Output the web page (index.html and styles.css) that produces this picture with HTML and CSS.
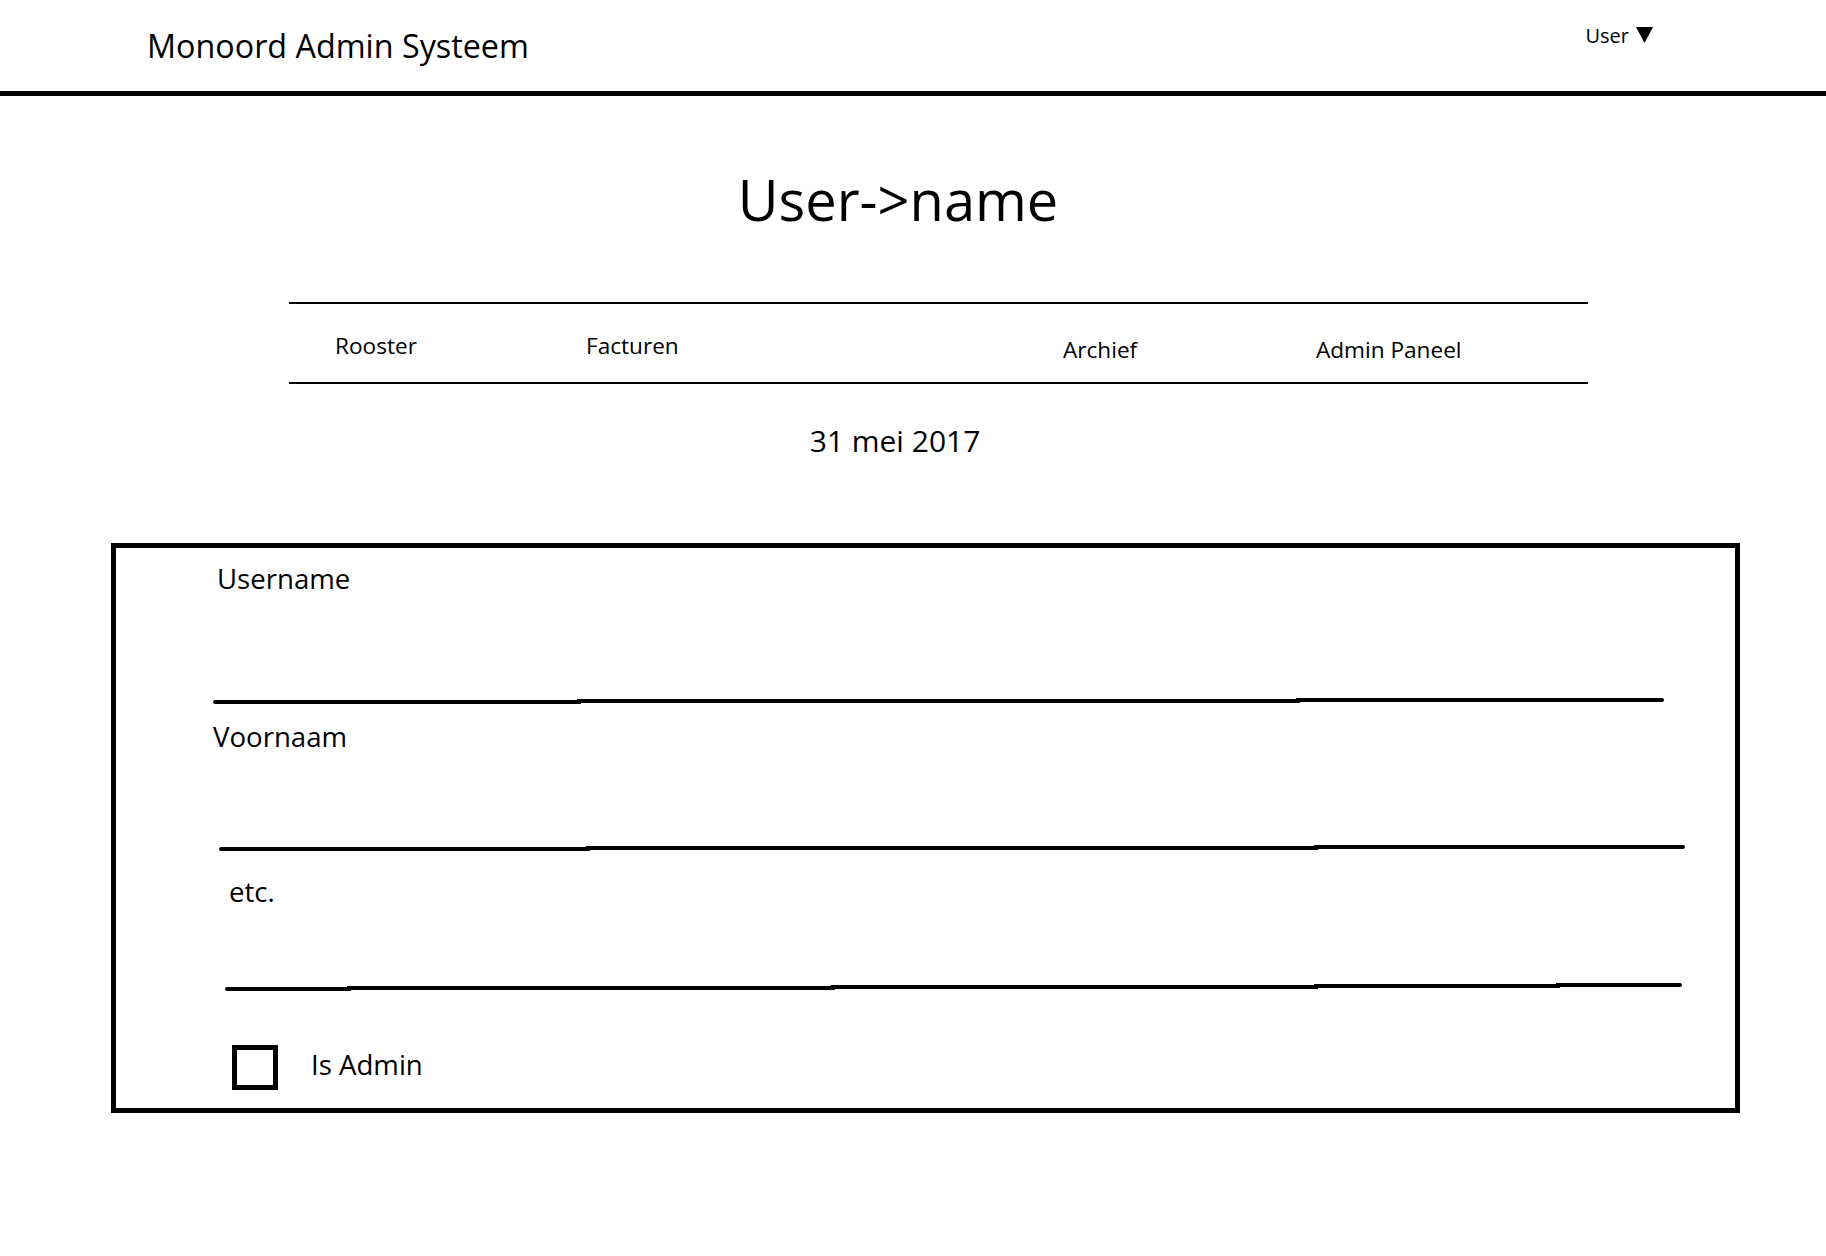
FILE: index.html
```html
<!DOCTYPE html>
<html lang="nl">
<head>
<meta charset="utf-8">
<title>Monoord Admin Systeem</title>
<link rel="stylesheet" href="styles.css">
</head>
<body>
<header class="topbar">
  <div class="brand">Monoord Admin Systeem</div>
  <div class="user-menu">
    <span class="user-label">User</span>
    <svg class="caret" width="17" height="16" viewBox="0 0 17 16"><polygon points="0,0 17,0 8.5,16" fill="#000"/></svg>
  </div>
</header>

<h1 class="page-title">User-&gt;name</h1>

<nav class="tabs">
  <a class="tab">Rooster</a>
  <a class="tab">Facturen</a>
  <a class="tab tab-low">Archief</a>
  <a class="tab tab-low">Admin Paneel</a>
</nav>

<div class="date">31 mei 2017</div>

<section class="form-box">
  <div class="label label-username">Username</div>
  <svg class="field-line line-1" width="1451" height="8" viewBox="0 0 1451 8"><path d="M2 5 H366 V4 H1085 V3 H1449"/></svg>

  <div class="label label-voornaam">Voornaam</div>
  <svg class="field-line line-2" width="1466" height="8" viewBox="0 0 1466 8"><path d="M2 5 H369 V4 H1097 V3 H1464"/></svg>

  <div class="label label-etc">etc.</div>
  <svg class="field-line line-3" width="1457" height="8" viewBox="0 0 1457 8"><path d="M2 6 H124 V5 H608 V4 H1091 V3 H1333 V2 H1455"/></svg>

  <div class="check-row">
    <span class="checkbox"></span>
    <span class="check-label">Is Admin</span>
  </div>
</section>
</body>
</html>
```

FILE: styles.css
```css
html, body {
  margin: 0;
  padding: 0;
  background: #fff;
  color: #000;
  font-family: "Open Sans", "Noto Sans", sans-serif;
}

.topbar {
  display: flex;
  justify-content: space-between;
  align-items: flex-start;
  height: 91px;
  border-bottom: 5px solid #000;
  padding: 0 173px 0 147px;
}

.brand {
  font-size: 32.3px;
  line-height: 40px;
  padding-top: 25px;
}

.user-menu {
  display: flex;
  align-items: flex-start;
  gap: 7px;
  padding-top: 24px;
}

.user-label {
  font-size: 20px;
  line-height: 24px;
}

.caret {
  display: block;
  margin-top: 3px;
}

.page-title {
  margin: 73px 0 0;
  padding-right: 30px;
  text-align: center;
  font-size: 56px;
  line-height: 60px;
  font-weight: normal;
}

.tabs {
  display: grid;
  grid-template-columns: 251px 477px 253px auto;
  align-items: start;
  margin: 73px 0 0 289px;
  width: 1299px;
  height: 82px;
  box-sizing: border-box;
  border-top: 2px solid #000;
  border-bottom: 2px solid #000;
  padding-left: 46px;
}

.tab {
  font-size: 22.6px;
  line-height: 30px;
  padding-top: 27px;
}

.tab-low {
  padding-top: 31px;
}

.date {
  margin-top: 37px;
  padding-right: 36px;
  text-align: center;
  font-size: 30px;
  line-height: 40px;
}

.form-box {
  margin: 82px 0 0 111px;
  width: 1629px;
  height: 570px;
  box-sizing: border-box;
  border: 5px solid #000;
  padding-top: 12px;
}

.label {
  font-size: 27.6px;
  line-height: 36px;
}

.label-username { margin-left: 101px; }
.label-voornaam { margin-left: 97px; margin-top: 13px; }
.label-etc { margin-left: 113px; margin-top: 21px; }

.field-line {
  display: block;
}

.field-line path {
  fill: none;
  stroke: #000;
  stroke-width: 4;
  stroke-linecap: round;
}

.line-1 { margin: 101px 0 0 97px; }
.line-2 { margin: 90px 0 0 103px; }
.line-3 { margin: 74px 0 0 109px; }

.check-row {
  display: flex;
  align-items: flex-start;
  margin: 54px 0 0 116px;
}

.checkbox {
  display: block;
  width: 46px;
  height: 45px;
  box-sizing: border-box;
  border: 5px solid #000;
}

.check-label {
  font-size: 27.6px;
  line-height: 36px;
  margin: 1px 0 0 33px;
}
```
